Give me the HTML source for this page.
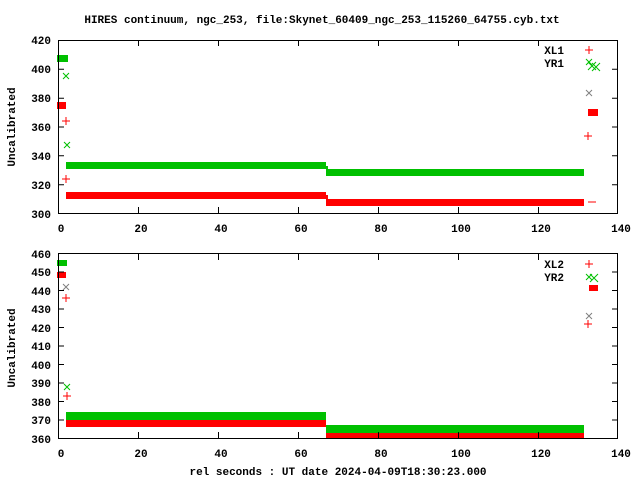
<!DOCTYPE html>
<html><head><style>
html,body{margin:0;padding:0;background:#fff;}
svg{display:block;}
text{font-family:"Liberation Mono",monospace;font-weight:bold;font-size:11px;fill:#000;}
</style></head><body>
<svg width="640" height="480" viewBox="0 0 640 480" xmlns="http://www.w3.org/2000/svg">
<text x="322" y="23" text-anchor="middle">HIRES continuum, ngc_253, file:Skynet_60409_ngc_253_115260_64755.cyb.txt</text>

<!-- Plot 1 -->
<g>
<rect x="66" y="162" width="260" height="7" fill="#00c000"/>
<rect x="326" y="169" width="258" height="7" fill="#00c000"/>
<rect x="326" y="166" width="2" height="8" fill="#00c000"/>
<rect x="66" y="192" width="260" height="7" fill="#ff0000"/>
<rect x="326" y="199" width="258" height="7" fill="#ff0000"/>
<rect x="326" y="195" width="2" height="8" fill="#ff0000"/>
<rect x="57" y="55" width="11" height="7" fill="#00c000"/>
<rect x="57" y="102" width="9" height="7" fill="#ff0000"/>
<g stroke="#00c000" stroke-width="1" fill="none">
<path d="M63 73l6 6M69 73l-6 6M64 142l6 6M70 142l-6 6M586 59l6 6M592 59l-6 6M588 62l8 8M596 62l-8 8M592 63l8 8M600 63l-8 8"/>
</g>
<path d="M586 90l6 6M592 90l-6 6" stroke="#808080" fill="none"/>
<g stroke="#ff0000" stroke-width="1" fill="none">
<path d="M66 117v8M62 121h8M66 175v8M62 179h8M588 132v8M584 136h8M589 46v8M585 50h8M588 202h8"/>
</g>
<rect x="588" y="109" width="10" height="7" fill="#ff0000"/>
<text x="564" y="54" text-anchor="end">XL1</text>
<text x="564" y="67" text-anchor="end">YR1</text>
<rect x="58.5" y="40.5" width="559" height="173" fill="none" stroke="#000"/>
<g stroke="#000">
<path d="M58 69.3h6M58 98.2h6M58 127h6M58 155.8h6M58 184.7h6M618 69.3h-6M618 98.2h-6M618 127h-6M618 155.8h-6M618 184.7h-6"/>
<path d="M138.5 213v-6M218.5 213v-6M298.5 213v-6M378.5 213v-6M458.5 213v-6M538.5 213v-6M138.5 40v6M218.5 40v6M298.5 40v6M378.5 40v6M458.5 40v6M538.5 40v6"/>
</g>
<g text-anchor="end">
<text x="51" y="44">420</text><text x="51" y="73">400</text><text x="51" y="102">380</text><text x="51" y="131">360</text><text x="51" y="160">340</text><text x="51" y="189">320</text><text x="51" y="218">300</text>
</g>
<g text-anchor="middle">
<text x="61" y="232">0</text><text x="141" y="232">20</text><text x="221" y="232">40</text><text x="301" y="232">60</text><text x="381" y="232">80</text><text x="461" y="232">100</text><text x="541" y="232">120</text><text x="621" y="232">140</text>
</g>
<text transform="translate(15,127) rotate(-90)" text-anchor="middle">Uncalibrated</text>
</g>

<!-- Plot 2 -->
<g>
<rect x="66" y="412" width="260" height="8" fill="#00c000"/>
<rect x="66" y="420" width="260" height="7" fill="#ff0000"/>
<rect x="326" y="425" width="258" height="8" fill="#00c000"/>
<rect x="326" y="433" width="258" height="5" fill="#ff0000"/>
<rect x="57" y="260" width="10" height="6" fill="#00c000"/>
<rect x="57" y="272" width="9" height="6" fill="#ff0000"/>
<g stroke="#00c000" fill="none">
<path d="M64 384l6 6M70 384l-6 6M586 274l6 6M592 274l-6 6M590 274l8 8M598 274l-8 8"/>
</g>
<path d="M63 284l6 6M69 284l-6 6M586 313l6 6M592 313l-6 6" stroke="#808080" fill="none"/>
<g stroke="#ff0000" fill="none">
<path d="M66 294v8M62 298h8M67 392v8M63 396h8M588 320v8M584 324h8M589 260v8M585 264h8"/>
</g>
<rect x="589" y="285" width="9" height="6" fill="#ff0000"/>
<text x="564" y="268" text-anchor="end">XL2</text>
<text x="564" y="281" text-anchor="end">YR2</text>
<rect x="58.5" y="253.5" width="559" height="185" fill="none" stroke="#000"/>
<g stroke="#000">
<path d="M58 272h6M58 290.5h6M58 309h6M58 327.5h6M58 346h6M58 364.5h6M58 383h6M58 401.5h6M58 420h6M618 272h-6M618 290.5h-6M618 309h-6M618 327.5h-6M618 346h-6M618 364.5h-6M618 383h-6M618 401.5h-6M618 420h-6"/>
<path d="M138.5 438v-6M218.5 438v-6M298.5 438v-6M378.5 438v-6M458.5 438v-6M538.5 438v-6M138.5 254v6M218.5 254v6M298.5 254v6M378.5 254v6M458.5 254v6M538.5 254v6"/>
</g>
<g text-anchor="end">
<text x="51" y="258">460</text><text x="51" y="276">450</text><text x="51" y="295">440</text><text x="51" y="313">430</text><text x="51" y="332">420</text><text x="51" y="350">410</text><text x="51" y="369">400</text><text x="51" y="387">390</text><text x="51" y="406">380</text><text x="51" y="424">370</text><text x="51" y="443">360</text>
</g>
<g text-anchor="middle">
<text x="61" y="457">0</text><text x="141" y="457">20</text><text x="221" y="457">40</text><text x="301" y="457">60</text><text x="381" y="457">80</text><text x="461" y="457">100</text><text x="541" y="457">120</text><text x="621" y="457">140</text>
</g>
<text transform="translate(15,348) rotate(-90)" text-anchor="middle">Uncalibrated</text>
<text x="338" y="475" text-anchor="middle">rel seconds : UT date 2024-04-09T18:30:23.000</text>
</g>
</svg>
</body></html>
